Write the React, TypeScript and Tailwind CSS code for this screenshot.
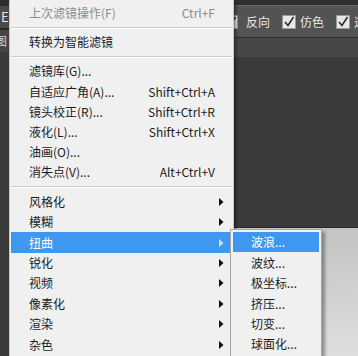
import React from "react";

const font = { fontFamily: '"Microsoft YaHei", "Noto Sans CJK SC", "Liberation Sans", sans-serif' };

type Item =
  | { t: "sep" }
  | { t: "item"; label: string; sc?: string; arrow?: boolean; disabled?: boolean; active?: boolean };

const items: Item[] = [
  { t: "item", label: "上次滤镜操作(F)", sc: "Ctrl+F", disabled: true },
  { t: "sep" },
  { t: "item", label: "转换为智能滤镜" },
  { t: "sep" },
  { t: "item", label: "滤镜库(G)..." },
  { t: "item", label: "自适应广角(A)...", sc: "Shift+Ctrl+A" },
  { t: "item", label: "镜头校正(R)...", sc: "Shift+Ctrl+R" },
  { t: "item", label: "液化(L)...", sc: "Shift+Ctrl+X" },
  { t: "item", label: "油画(O)..." },
  { t: "item", label: "消失点(V)...", sc: "Alt+Ctrl+V" },
  { t: "sep" },
  { t: "item", label: "风格化", arrow: true },
  { t: "item", label: "模糊", arrow: true },
  { t: "item", label: "扭曲", arrow: true, active: true },
  { t: "item", label: "锐化", arrow: true },
  { t: "item", label: "视频", arrow: true },
  { t: "item", label: "像素化", arrow: true },
  { t: "item", label: "渲染", arrow: true },
  { t: "item", label: "杂色", arrow: true },
];

const sub = ["波浪...", "波纹...", "极坐标...", "挤压...", "切变...", "球面化..."];

function Arrow({ light }: { light?: boolean }) {
  return (
    <svg width="5" height="8" viewBox="0 0 5 8" className="shrink-0">
      <path d="M0 0 L4.5 4 L0 8 Z" fill={light ? "#cfe4fb" : "#111"} />
    </svg>
  );
}

function Check() {
  return (
    <div className="shrink-0 w-[14px] h-[14px] bg-[#e8e8e8] border border-[#9a9a9a] flex items-center justify-center">
      <svg width="12" height="12" viewBox="0 0 12 12">
        <path d="M2 6 L5 9.5 L10.5 1" stroke="#2a2a2a" strokeWidth="1.6" fill="none" />
      </svg>
    </div>
  );
}

export default function App() {
  return (
    <div className="relative w-[358px] h-[356px] overflow-hidden bg-[#3a3a3a]" style={font}>
      {/* background workspace */}
      <div className="flex w-full h-full">
        <div className="w-[10px] shrink-0 h-full bg-[#3c3c3c] border-r border-[#6a6a6a] flex flex-col overflow-hidden">
          <div className="h-[6px] bg-[#2e2e2e]" />
          <div className="h-[22px] bg-[#4a4a4a] text-[13px] leading-[22px] text-[#e8e8e8] pl-[1px]">E</div>
          <div className="h-[2px] bg-[#2a2a2a]" />
          <div className="h-[22px] bg-[#444] text-[12px] leading-[22px] text-[#d0d0d0] -ml-[5px] whitespace-nowrap">图</div>
          <div className="flex-1 bg-[#3a3a3a]" />
        </div>
        <div className="flex-1 min-w-0 flex flex-col overflow-hidden">
          <div className="h-[5px] bg-[#2f2f2f]" />
          <div className="h-[32px] bg-[#535353] border-t border-[#6a6a6a] flex items-center text-[12px] text-[#e6e6e6] whitespace-nowrap overflow-hidden">
            <div className="ml-[214px] flex items-center shrink-0">
              <Check />
              <span className="ml-[8px]">反向</span>
              <span className="ml-[12px]"><Check /></span>
              <span className="ml-[4px]">仿色</span>
              <span className="ml-[12px]"><Check /></span>
              <span className="ml-[4px]">透明区域</span>
            </div>
          </div>
          <div className="h-[20px] bg-[#474747] border-t border-[#2c2c2c]" />
          <div className="h-[171px] bg-[#3a3a3a] border-b border-[#2a2a2a]" />
          <div className="flex-1 bg-gradient-to-b from-[#c4c4c4] to-[#dedede]" />
        </div>
      </div>

      {/* main menu */}
      <div className="absolute left-[9px] top-0 w-[225px] h-[360px] bg-[#f0f0f0] border-l border-[#c8c8c8] border-r border-[#9a9a9a] shadow-[2px_2px_3px_rgba(0,0,0,0.45)] pt-[3px] text-[12px]">
        {items.map((it, i) =>
          it.t === "sep" ? (
            <div key={i} className="h-[9px] flex flex-col justify-center px-[1px]">
              <div className="h-px bg-[#c9c9c9]" />
              <div className="h-px bg-white" />
            </div>
          ) : (
            <div
              key={i}
              className={`${i < 11 ? "h-[20.2px]" : "h-[20.45px]"} flex items-center pl-[18px] pr-[8px] mx-[1px] ${
                it.active ? "bg-[#3e98f0] text-white" : it.disabled ? "text-[#8c8c8c]" : "text-[#1b1b1b]"
              }`}
            >
              <span className="flex-1 whitespace-nowrap">{it.label}</span>
              {it.sc && <span className="whitespace-nowrap mr-[9px]">{it.sc}</span>}
              {it.arrow && <Arrow light={it.active} />}
            </div>
          )
        )}
      </div>

      {/* submenu */}
      <div className="absolute left-[230px] top-[229px] w-[92px] h-[140px] bg-[#f0f0f0] border border-[#a5a5a5] shadow-[3px_3px_3px_rgba(0,0,0,0.35)] p-[2px] text-[12px]">
        {sub.map((s, i) => (
          <div
            key={i}
            className={`h-[20.45px] flex items-center pl-[18px] whitespace-nowrap ${
              i === 0 ? "bg-[#3e98f0] text-white" : "text-[#1b1b1b]"
            }`}
          >
            {s}
          </div>
        ))}
      </div>
    </div>
  );
}
